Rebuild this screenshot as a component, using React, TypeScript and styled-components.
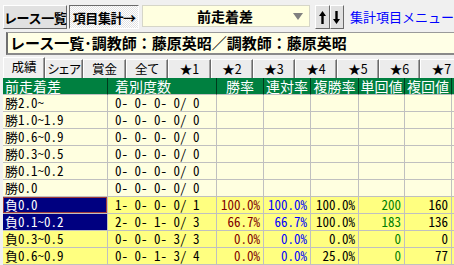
import React from "react";
import styled, { createGlobalStyle, css } from "styled-components";

const GlobalStyle = createGlobalStyle`
  html, body {
    margin: 0;
    padding: 0;
    background: #f0f0f0;
  }
  body {
    font-family: "Noto Sans CJK JP", sans-serif;
    overflow: hidden;
  }
`;

const Screen = styled.div`
  width: 454px;
  height: 265px;
  overflow: hidden;
  background: #f0f0f0;
`;

// ---- top toolbar ----
const TopBar = styled.div`
  display: flex;
  align-items: flex-start;
  height: 31px;
  padding: 5px 0 0 3px;
  box-sizing: border-box;
  white-space: nowrap;
`;

const ToolButton = styled.div<{ $w: number; $pressed?: boolean }>`
  width: ${(p) => p.$w}px;
  height: 24px;
  margin-right: 2px;
  box-sizing: border-box;
  display: flex;
  align-items: center;
  justify-content: center;
  font-size: 13px;
  font-weight: bold;
  letter-spacing: -0.4px;
  color: #000;
  border: 1px solid;
  border-color: #ffffff #6a6a6a #6a6a6a #ffffff;
  background: #e1e1e1;
  ${(p) =>
    p.$pressed &&
    css`
      border-color: #6a6a6a #ffffff #ffffff #6a6a6a;
      background: repeating-conic-gradient(#ffffff 0 25%, #e2e2e2 0 50%) 0 0 / 2px 2px;
    `}
`;

const Combo = styled.div`
  width: 186px;
  height: 22px;
  margin: 0 5px 0 1px;
  box-sizing: border-box;
  display: flex;
  align-items: center;
  padding: 0 6px 0 14px;
  background: #ffffe0;
  border: 1px solid #d6d6c8;
  font-size: 14px;
  font-weight: bold;
`;

const ComboText = styled.span`
  flex: 1;
  text-align: center;
`;

const ComboArrow = styled.span`
  width: 0;
  height: 0;
  border-left: 5px solid transparent;
  border-right: 5px solid transparent;
  border-top: 7px solid #808080;
`;

const ArrowButton = styled.div`
  width: 16px;
  height: 24px;
  box-sizing: border-box;
  display: flex;
  align-items: center;
  justify-content: center;
  border: 1px solid;
  border-color: #ffffff #6a6a6a #6a6a6a #ffffff;
  background: #e1e1e1;
`;

const MenuLink = styled.span`
  margin-left: 6px;
  line-height: 24px;
  font-size: 13px;
  color: #0000ff;
`;

// ---- title ----
const TitleBox = styled.div`
  margin: 1px 0 0 6px;
  height: 23px;
  box-sizing: border-box;
  border-top: 1px solid #9a9a9a;
  border-left: 2px solid #6f6f6f;
  border-bottom: 2px solid #8a8a8a;
  background: #ffffe6;
  padding-left: 2px;
  font-size: 15px;
  font-weight: bold;
  line-height: 20px;
  white-space: nowrap;
  overflow: hidden;
`;

// ---- tabs ----
const TabStrip = styled.div`
  display: flex;
  align-items: flex-end;
  height: 23px;
  padding-left: 3px;
  box-sizing: border-box;
  white-space: nowrap;
`;

const Tab = styled.div<{ $w: number; $active?: boolean }>`
  flex: none;
  width: ${(p) => p.$w}px;
  height: ${(p) => (p.$active ? 21 : 19)}px;
  box-sizing: border-box;
  display: flex;
  align-items: center;
  justify-content: center;
  padding-bottom: ${(p) => (p.$active ? 3 : 1)}px;
  border-top: 1px solid #ffffff;
  border-left: 1px solid #ffffff;
  border-right: 1px solid #6a6a6a;
  box-shadow: inset -1px 0 #a0a0a0;
  background: ${(p) => (p.$active ? "#f0f0f0" : "#ececec")};
  font-size: 12.5px;
  line-height: 14px;
  font-feature-settings: "palt";
  color: #000;
`;

// ---- table ----
const Grid = styled.div`
  display: grid;
  grid-template-columns: 105px 109px 47px 47px 48px 46px 47px 47px;
  grid-auto-rows: 17px;
  margin-left: 3px;
  width: max-content;
`;

const HeadCell = styled.div<{ $left?: number }>`
  box-sizing: border-box;
  background: #008040;
  color: #ffffff;
  font-size: 14px;
  line-height: 16px;
  border-right: 1px solid #003a1c;
  border-bottom: 1px solid #c0c0c0;
  white-space: nowrap;
  text-align: ${(p) => (p.$left !== undefined ? "left" : "center")};
  padding-left: ${(p) => p.$left ?? 0}px;
`;

const Cell = styled.div<{
  $bg: string;
  $color?: string;
  $right?: boolean;
  $left?: number;
  $focus?: boolean;
}>`
  box-sizing: border-box;
  background: ${(p) => p.$bg};
  color: ${(p) => p.$color ?? "#000"};
  font-size: 13px;
  line-height: 16px;
  font-feature-settings: "hwid";
  border-right: 1px solid #c0c0c0;
  border-bottom: 1px solid #c0c0c0;
  white-space: pre;
  text-align: ${(p) => (p.$right ? "right" : "left")};
  padding: 0 ${(p) => (p.$right ? 3 : 0)}px 0 ${(p) => p.$left ?? 0}px;
  ${(p) =>
    p.$focus &&
    css`
      box-shadow: inset 0 0 0 1px #a03a3a;
    `}
`;

type Row = {
  label: string;
  counts: string;
  win?: string;
  ren?: string;
  fuku?: string;
  tan?: string;
  fukuK?: string;
  selected?: boolean;
  focus?: boolean;
};

const rows: Row[] = [
  { label: "勝2.0〜", counts: "0- 0- 0- 0/ 0" },
  { label: "勝1.0〜1.9", counts: "0- 0- 0- 0/ 0" },
  { label: "勝0.6〜0.9", counts: "0- 0- 0- 0/ 0" },
  { label: "勝0.3〜0.5", counts: "0- 0- 0- 0/ 0" },
  { label: "勝0.1〜0.2", counts: "0- 0- 0- 0/ 0" },
  { label: "勝0.0", counts: "0- 0- 0- 0/ 0" },
  {
    label: "負0.0",
    counts: "1- 0- 0- 0/ 1",
    win: "100.0%",
    ren: "100.0%",
    fuku: "100.0%",
    tan: "200",
    fukuK: "160",
    selected: true,
    focus: true,
  },
  {
    label: "負0.1〜0.2",
    counts: "2- 0- 1- 0/ 3",
    win: "66.7%",
    ren: "66.7%",
    fuku: "100.0%",
    tan: "183",
    fukuK: "136",
    selected: true,
  },
  { label: "負0.3〜0.5", counts: "0- 0- 0- 3/ 3", win: "0.0%", ren: "0.0%", fuku: "0.0%", tan: "0", fukuK: "0" },
  { label: "負0.6〜0.9", counts: "0- 0- 1- 3/ 4", win: "0.0%", ren: "0.0%", fuku: "25.0%", tan: "0", fukuK: "77" },
];

const tabs: [string, number][] = [
  ["成績", 42],
  ["シェア", 38],
  ["賞金", 43],
  ["全て", 42],
  ["★1", 43],
  ["★2", 42],
  ["★3", 42],
  ["★4", 42],
  ["★5", 42],
  ["★6", 41],
  ["★7", 43],
];

const UpIcon = () => (
  <svg width="9" height="15" viewBox="0 0 9 15">
    <path d="M4.5 1 L1 6 H3.3 V14 H5.7 V6 H8 Z" fill="#000" />
  </svg>
);

const DownIcon = () => (
  <svg width="9" height="15" viewBox="0 0 9 15">
    <path d="M4.5 14 L1 9 H3.3 V1 H5.7 V9 H8 Z" fill="#000" />
  </svg>
);

export default function App() {
  return (
    <Screen>
      <GlobalStyle />
      <TopBar>
        <ToolButton $w={72}>レース一覧</ToolButton>
        <ToolButton $w={78} $pressed>
          項目集計→
        </ToolButton>
        <Combo>
          <ComboText>前走着差</ComboText>
          <ComboArrow />
        </Combo>
        <ArrowButton>
          <UpIcon />
        </ArrowButton>
        <ArrowButton>
          <DownIcon />
        </ArrowButton>
        <MenuLink>集計項目メニュー</MenuLink>
      </TopBar>

      <TitleBox>レース一覧･調教師：藤原英昭／調教師：藤原英昭</TitleBox>

      <TabStrip>
        {tabs.map(([name, w], i) => (
          <Tab key={name} $w={w} $active={i === 0}>
            {name}
          </Tab>
        ))}
      </TabStrip>

      <Grid>
        <HeadCell $left={2}>前走着差</HeadCell>
        <HeadCell $left={7}>着別度数</HeadCell>
        <HeadCell>勝率</HeadCell>
        <HeadCell>連対率</HeadCell>
        <HeadCell>複勝率</HeadCell>
        <HeadCell>単回値</HeadCell>
        <HeadCell>複回値</HeadCell>
        <HeadCell />
        {rows.map((r) => {
          const bg = r.win ? "#ffff80" : "#ffffe0";
          return (
            <React.Fragment key={r.label}>
              <Cell
                $bg={r.selected ? "#000080" : bg}
                $color={r.selected ? "#ffffff" : "#000"}
                $left={2}
                $focus={r.focus}
              >
                {r.label}
              </Cell>
              <Cell $bg={bg} $left={7}>
                {r.counts}
              </Cell>
              <Cell $bg={bg} $right $color="#800000">
                {r.win}
              </Cell>
              <Cell $bg={bg} $right $color="#0000ff">
                {r.ren}
              </Cell>
              <Cell $bg={bg} $right>
                {r.fuku}
              </Cell>
              <Cell $bg={bg} $right $color="#008000">
                {r.tan}
              </Cell>
              <Cell $bg={bg} $right>
                {r.fukuK}
              </Cell>
              <Cell $bg={bg} />
            </React.Fragment>
          );
        })}
      </Grid>
    </Screen>
  );
}
